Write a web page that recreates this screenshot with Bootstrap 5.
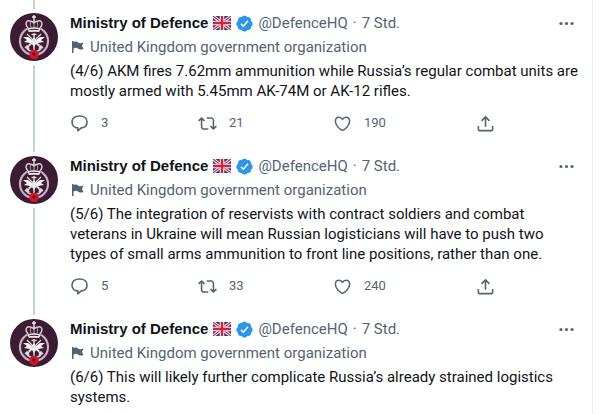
<!DOCTYPE html>
<html lang="en">
<head>
<meta charset="utf-8">
<meta name="viewport" content="width=device-width, initial-scale=1">
<title>Ministry of Defence thread</title>
<link href="https://cdn.jsdelivr.net/npm/bootstrap@5.3.0/dist/css/bootstrap.min.css" rel="stylesheet">
<style>
body { font-family: Roboto, "Liberation Sans", sans-serif; font-size: 15px; line-height: 20px; color: #0f1419; background: #fff; }
.timeline { margin-right: 9px; border-right: 1px solid #eff3f4; min-height: 100vh; }
.post { padding: 0 8px 0 10px; gap: 12px; }
.rail { width: 48px; gap: 4px; }
.thread-line { width: 2px; background: #c4cfd6; }
.thread-top { height: 9px; }
.avatar { width: 48px; height: 48px; }
.post-body { padding: 13px 0 10px; }
.muted, .muted:hover { color: #536471; }
.author { color: #0f1419; font-family: "Liberation Sans", Arial, sans-serif; font-weight: 700; }
.flag { width: 18px; height: 14px; margin: 0 5px; }
.tick { width: 17px; height: 17px; margin-right: 5px; }
.middot { margin: 0 5px; }
.org svg { width: 12px; height: 14px; margin: 0 6px 0 2px; }
.actions { display: grid; grid-template-columns: 128fr 135fr 143fr 108fr; margin-top: 12px; }
.action { font-size: 13px; gap: 12px; height: 20px; }
.action svg { width: 19px; height: 19px; }
.dots { margin-right: 8px; }
.dots svg { width: 19px; height: 19px; }
</style>
</head>
<body>
<svg class="d-none" aria-hidden="true">
  <symbol id="crest" viewBox="0 0 48 48">
    <circle cx="24" cy="24" r="24" fill="#3b1c32"/>
    <g fill="none">
      <circle cx="24" cy="28" r="14" stroke-width="2.200" stroke="#bda3b7"/>
      <circle cx="24" cy="28" r="14" stroke-width=".8" stroke="#f0e5ee" stroke-dasharray="1 1"/>
    </g>
    <path d="M17 8h14v8H17z" fill="#3b1c32"/>
    <path d="M18 15c-4-5-1-8 2-7 1 0 3 1 4 2 1-1 3-2 4-2 3-1 6 2 2 7l-1 3H19z" fill="none" stroke="#dfcfdb" stroke-width="1.400"/>
    <path d="M21 14c-1-2-1-4 0-5M27 14c1-2 1-4 0-5M24 10v5" fill="none" stroke="#bda3b7"/>
    <path d="M24 2v7M22 4h4M18 16q6-2 12 0M19 18q5-1 10 0" fill="none" stroke="#f3e9f1" stroke-width="1.400"/>
    <path d="M24 20v18M21.500 21.500h5M16 33q1 5 8 6 7-1 8-6M15 35l2-2 2 3m14-1l-2-2-2 3" fill="none" stroke="#dfcfdb" stroke-width="1.500"/>
    <path d="M13 24l5 0 4 3 2-3 2 3 4-3 5 0-4 3 3 2-6 1 3 3-5-2-2 3-2-3-5 2 3-3-6-1 3-2z" fill="#f8f1f6"/>
    <path d="M17 21l14 14M31 21L17 35" stroke="#e9dce6" stroke-width="1.300"/>
    <circle cx="24" cy="41.500" r="4.800" fill="#d3142a"/>
    <circle cx="24" cy="41" r="1.500" fill="#3a0a15"/>
  </symbol>
  <symbol id="uk" viewBox="0 0 18 14">
    <path fill="#283a80" d="M0 0h18v14H0z"/>
    <path d="M0 0l18 14M18 0L0 14" stroke="#f2f2f5" stroke-width="3"/>
    <path d="M0 0l18 14M18 0L0 14" stroke="#d4213d" stroke-width="1.100"/>
    <path d="M9 0v14M0 7h18" stroke="#f2f2f5" stroke-width="4.600"/>
    <path d="M9 0v14M0 7h18" stroke="#d4213d" stroke-width="2.400"/>
  </symbol>
  <symbol id="verified" viewBox="1 1 22 22">
    <path fill="#2d95ea" d="M22.5 12.5c0-1.58-.875-2.95-2.148-3.6.154-.435.238-.905.238-1.4 0-2.21-1.71-3.998-3.818-3.998-.47 0-.92.084-1.336.25C14.818 2.415 13.51 1.5 12 1.5s-2.816.917-3.437 2.25c-.415-.165-.866-.25-1.336-.25-2.11 0-3.818 1.79-3.818 4 0 .494.083.964.237 1.4-1.272.65-2.147 2.018-2.147 3.6 0 1.495.782 2.798 1.942 3.486-.02.17-.032.34-.032.514 0 2.21 1.708 4 3.818 4 .47 0 .92-.086 1.335-.25.62 1.334 1.926 2.25 3.437 2.25 1.512 0 2.818-.916 3.437-2.25.415.163.865.248 1.336.248 2.11 0 3.818-1.79 3.818-4 0-.174-.012-.344-.033-.513 1.158-.687 1.943-1.99 1.943-3.484z"/>
    <path d="M7.500 12.500l3 3 6-7" fill="none" stroke="#fff" stroke-width="2"/>
  </symbol>
  <symbol id="pennant" viewBox="0 0 12 14">
    <path fill="#536471" d="M0 1h1.500v1C3 1 5 1.500 6 2.500S9 3.500 11.500 2.500L10 6l1.500 3C9 10 7 9.500 6 8.500S3.500 7.500 1.500 8.500V13H0z"/>
  </symbol>
  <symbol id="more" viewBox="0 0 24 24">
    <g fill="#536471"><circle cx="5" cy="12" r="2"/><circle cx="12" cy="12" r="2"/><circle cx="19" cy="12" r="2"/></g>
  </symbol>
  <symbol id="reply" viewBox="0 0 19 19">
    <path d="M9.500 2C4.800 2 2 4.500 2 7.900s2.600 5.700 5.800 6v2.900l3.500-2.900C15 13.500 17 11.200 17 7.900 17 4.500 14.200 2 9.500 2z" fill="none" stroke="#536471" stroke-width="1.600" stroke-linejoin="round"/>
  </symbol>
  <symbol id="repost" viewBox="0 0 24 24">
    <path fill="#536471" d="M4.500 3.880l4.432 4.140-1.364 1.460L5.500 7.550V16c0 1.100.896 2 2 2H13v2H7.500c-2.209 0-4-1.790-4-4V7.550L1.432 9.480.068 8.020 4.500 3.880zM16.500 6H11V4h5.500c2.209 0 4 1.790 4 4v8.450l2.068-1.930 1.364 1.460-4.432 4.140-4.432-4.140 1.364-1.460 2.068 1.930V8c0-1.100-.896-2-2-2z"/>
  </symbol>
  <symbol id="heart" viewBox="0 0 24 24">
    <path d="M12 20.700C8.500 19 3 14.500 3 9.200 3 6.200 5 4 7.600 4c1.900 0 3.500 1.100 4.400 2.900C12.900 5.100 14.500 4 16.400 4 19 4 21 6.200 21 9.200c0 5.300-5.500 9.800-9 11.500z" fill="none" stroke="#536471" stroke-width="1.900" stroke-linejoin="round"/>
  </symbol>
  <symbol id="share" viewBox="0 0 24 24">
    <path d="M12 16V4M7 8.700l5-5 5 5M3 15v4.500c0 .8.700 1.500 1.500 1.500h15c.8 0 1.500-.7 1.500-1.500V15" fill="none" stroke="#536471" stroke-width="2"/>
  </symbol>
</svg>

<main class="timeline">
  <article class="post d-flex">
    <div class="rail d-flex flex-column align-items-center flex-shrink-0">
      <div class="thread-line thread-top"></div>
      <svg class="avatar flex-shrink-0" role="img" aria-label="Ministry of Defence crest"><use href="#crest"/></svg>
      <div class="thread-line flex-grow-1"></div>
    </div>
    <div class="post-body flex-grow-1">
      <header class="d-flex align-items-center">
        <a class="author text-decoration-none" href="#">Ministry of Defence</a>
        <svg class="flag" role="img" aria-label="United Kingdom"><use href="#uk"/></svg>
        <svg class="tick" role="img" aria-label="Verified"><use href="#verified"/></svg>
        <a class="muted text-decoration-none" href="#">@DefenceHQ</a><span class="middot muted">·</span><a class="muted text-decoration-none" href="#">7 Std.</a>
        <button class="dots btn p-0 border-0 d-flex ms-auto" type="button" aria-label="More"><svg><use href="#more"/></svg></button>
      </header>
      <div class="org muted d-flex align-items-center my-1"><svg aria-hidden="true"><use href="#pennant"/></svg>United Kingdom government organization</div>
      <p class="mb-0">(4/6) AKM fires 7.62mm ammunition while Russia’s regular combat units are<br>mostly armed with 5.45mm AK-74M or AK-12 rifles.</p>
      <div class="actions">
        <button class="action muted btn p-0 border-0 d-flex align-items-center" type="button" aria-label="Reply"><svg><use href="#reply"/></svg>3</button>
        <button class="action muted btn p-0 border-0 d-flex align-items-center" type="button" aria-label="Retweet"><svg><use href="#repost"/></svg>21</button>
        <button class="action muted btn p-0 border-0 d-flex align-items-center" type="button" aria-label="Like"><svg><use href="#heart"/></svg>190</button>
        <button class="action muted btn p-0 border-0 d-flex align-items-center" type="button" aria-label="Share"><svg><use href="#share"/></svg></button>
      </div>
    </div>
  </article>

  <article class="post d-flex">
    <div class="rail d-flex flex-column align-items-center flex-shrink-0">
      <div class="thread-line thread-top"></div>
      <svg class="avatar flex-shrink-0" role="img" aria-label="Ministry of Defence crest"><use href="#crest"/></svg>
      <div class="thread-line flex-grow-1"></div>
    </div>
    <div class="post-body flex-grow-1">
      <header class="d-flex align-items-center">
        <a class="author text-decoration-none" href="#">Ministry of Defence</a>
        <svg class="flag" role="img" aria-label="United Kingdom"><use href="#uk"/></svg>
        <svg class="tick" role="img" aria-label="Verified"><use href="#verified"/></svg>
        <a class="muted text-decoration-none" href="#">@DefenceHQ</a><span class="middot muted">·</span><a class="muted text-decoration-none" href="#">7 Std.</a>
        <button class="dots btn p-0 border-0 d-flex ms-auto" type="button" aria-label="More"><svg><use href="#more"/></svg></button>
      </header>
      <div class="org muted d-flex align-items-center my-1"><svg aria-hidden="true"><use href="#pennant"/></svg>United Kingdom government organization</div>
      <p class="mb-0">(5/6) The integration of reservists with contract soldiers and combat<br>veterans in Ukraine will mean Russian logisticians will have to push two<br>types of small arms ammunition to front line positions, rather than one.</p>
      <div class="actions">
        <button class="action muted btn p-0 border-0 d-flex align-items-center" type="button" aria-label="Reply"><svg><use href="#reply"/></svg>5</button>
        <button class="action muted btn p-0 border-0 d-flex align-items-center" type="button" aria-label="Retweet"><svg><use href="#repost"/></svg>33</button>
        <button class="action muted btn p-0 border-0 d-flex align-items-center" type="button" aria-label="Like"><svg><use href="#heart"/></svg>240</button>
        <button class="action muted btn p-0 border-0 d-flex align-items-center" type="button" aria-label="Share"><svg><use href="#share"/></svg></button>
      </div>
    </div>
  </article>

  <article class="post d-flex">
    <div class="rail d-flex flex-column align-items-center flex-shrink-0">
      <div class="thread-line thread-top"></div>
      <svg class="avatar flex-shrink-0" role="img" aria-label="Ministry of Defence crest"><use href="#crest"/></svg>
    </div>
    <div class="post-body flex-grow-1 pb-0">
      <header class="d-flex align-items-center">
        <a class="author text-decoration-none" href="#">Ministry of Defence</a>
        <svg class="flag" role="img" aria-label="United Kingdom"><use href="#uk"/></svg>
        <svg class="tick" role="img" aria-label="Verified"><use href="#verified"/></svg>
        <a class="muted text-decoration-none" href="#">@DefenceHQ</a><span class="middot muted">·</span><a class="muted text-decoration-none" href="#">7 Std.</a>
        <button class="dots btn p-0 border-0 d-flex ms-auto" type="button" aria-label="More"><svg><use href="#more"/></svg></button>
      </header>
      <div class="org muted d-flex align-items-center my-1"><svg aria-hidden="true"><use href="#pennant"/></svg>United Kingdom government organization</div>
      <p class="mb-0">(6/6) This will likely further complicate Russia’s already strained logistics<br>systems.</p>
    </div>
  </article>
</main>
<script src="https://cdn.jsdelivr.net/npm/bootstrap@5.3.0/dist/js/bootstrap.bundle.min.js"></script>
</body>
</html>
